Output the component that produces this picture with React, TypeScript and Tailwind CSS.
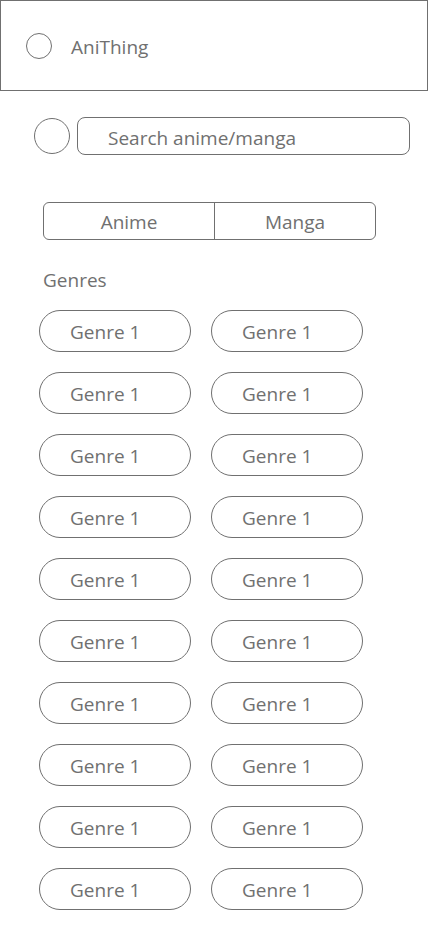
import { useState } from 'react';

const GENRES = Array.from({ length: 20 }, () => 'Genre 1');

export default function App() {
  const [mode, setMode] = useState<'anime' | 'manga'>('anime');
  const [search, setSearch] = useState('');

  return (
    <div className="w-[428px] min-h-[926px] bg-white text-[#707070] font-['Open_Sans',sans-serif]">
      <header className="h-[91px] border border-[#707070] flex items-center pl-[25px]">
        <div className="w-[26px] h-[26px] rounded-full border border-[#707070]" />
        <span className="ml-[19px] pt-[3px] text-[19px] leading-none">AniThing</span>
      </header>

      <div className="flex items-center pl-[34px] mt-[26px]">
        <div className="w-[36px] h-[36px] rounded-full border border-[#707070]" />
        <input
          type="text"
          value={search}
          onChange={(e) => setSearch(e.target.value)}
          placeholder="Search anime/manga"
          className="ml-[7px] w-[333px] h-[38px] rounded-[8px] border border-[#707070] pl-[30px] pt-[3px] text-[19px] outline-none placeholder:text-[#707070]"
        />
      </div>

      <div className="ml-[43px] mt-[47px] w-[333px] h-[38px] rounded-[6px] border border-[#707070] flex text-[19px]">
        <button
          onClick={() => setMode('anime')}
          className={`w-[171px] pt-[2px] border-r border-[#707070] ${mode === 'anime' ? '' : ''}`}
        >
          Anime
        </button>
        <button onClick={() => setMode('manga')} className="flex-1 pt-[2px]">
          Manga
        </button>
      </div>

      <h2 className="ml-[43px] mt-[28px] text-[19px] leading-[24px]">Genres</h2>

      <div className="ml-[39px] mt-[18px] grid grid-cols-[152px_152px] gap-x-[20px] gap-y-[20px] pb-[16px]">
        {GENRES.map((g, i) => (
          <button
            key={i}
            className="h-[42px] rounded-full border border-[#707070] text-left pl-[30px] pt-[2px] text-[19px]"
          >
            {g}
          </button>
        ))}
      </div>
    </div>
  );
}
